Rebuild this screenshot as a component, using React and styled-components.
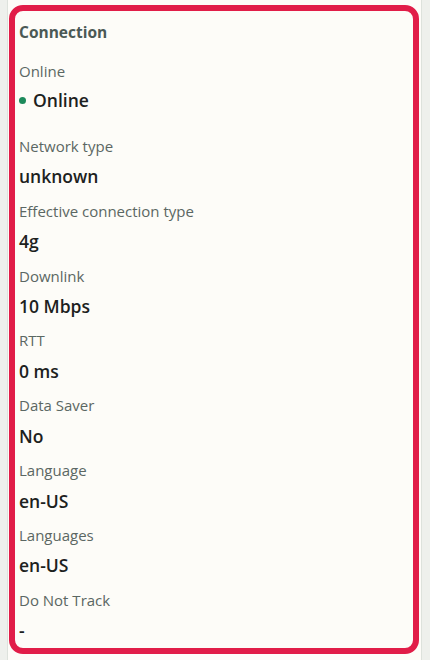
import React from "react";
import styled, { createGlobalStyle } from "styled-components";

const GlobalStyle = createGlobalStyle`
  html, body {
    margin: 0;
    padding: 0;
    background: #eef0ec;
    font-family: "Open Sans", "Noto Sans", sans-serif;
  }
`;

const items = [
  { label: "Network type", value: "unknown" },
  { label: "Effective connection type", value: "4g" },
  { label: "Downlink", value: "10 Mbps" },
  { label: "RTT", value: "0 ms" },
  { label: "Data Saver", value: "No" },
  { label: "Language", value: "en-US" },
  { label: "Languages", value: "en-US" },
  { label: "Do Not Track", value: "-" },
];

export default function App() {
  return (
    <>
      <GlobalStyle />
      <Page>
        <Panel>
          <Section>
            <Title>Connection</Title>
            <List>
              <Item $status>
                <Label>Online</Label>
                <Value>
                  <Dot $online />
                  Online
                </Value>
              </Item>
              {items.map((it) => (
                <Item key={it.label}>
                  <Label>{it.label}</Label>
                  <Value>{it.value}</Value>
                </Item>
              ))}
            </List>
          </Section>
        </Panel>
      </Page>
    </>
  );
}

const Page = styled.div`
  height: 100vh;
  padding: 0 8px 0 7px;
  box-sizing: border-box;
  overflow: hidden;
`;

const Panel = styled.div`
  background: #fdfcf8;
  border-left: 1px solid #dde2dc;
  border-right: 1px solid #dde2dc;
  padding: 5px 2px 0 1px;
  height: 100%;
  box-sizing: border-box;
`;

const Section = styled.section`
  border: 6px solid #e11d48;
  border-radius: 14px;
  padding: 11px 4px 5.5px 4px;
`;

const Title = styled.h3`
  margin: 0;
  font-size: 15.5px;
  line-height: 20px;
  font-weight: 700;
  color: #4b5955;
`;

const List = styled.div`
  display: flex;
  flex-direction: column;
  gap: 12.35px;
  margin-top: 19px;
`;

const Item = styled.div`
  display: flex;
  flex-direction: column;
  gap: ${(p) => (p.$status ? "7px" : "8.5px")};
  margin-bottom: ${(p) => (p.$status ? "11.5px" : "0")};
`;

const Label = styled.div`
  font-size: 15px;
  line-height: 20px;
  color: #5b6763;
`;

const Value = styled.div`
  display: flex;
  align-items: center;
  gap: 7px;
  font-size: 17.5px;
  line-height: 24px;
  font-weight: 600;
  color: #1c2120;
`;

const Dot = styled.span`
  width: 7px;
  height: 7px;
  border-radius: 50%;
  background: ${(p) => (p.$online ? "#1d8a5b" : "#9aa3a0")};
`;
